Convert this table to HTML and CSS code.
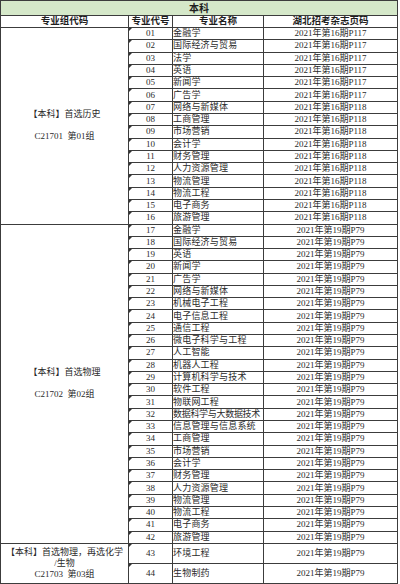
FILE: index.html
```html
<!DOCTYPE html>
<html lang="zh">
<head>
<meta charset="utf-8">
<title>本科</title>
<link rel="stylesheet" href="styles.css">
</head>
<body>
<table class="sheet">
  <colgroup>
    <col class="c1"><col class="c2"><col class="c3"><col class="c4">
  </colgroup>
  <thead>
    <tr class="title-row"><th colspan="4" class="title">本科</th></tr>
    <tr class="head-row">
      <th>专业组代码</th><th>专业代号</th><th>专业名称</th><th>湖北招考杂志页码</th>
    </tr>
  </thead>
  <tbody>
    <tr><td class="group" rowspan="16">【本科】首选历史<br><br>C21701&nbsp;&nbsp;第01组</td><td class="code">01</td><td class="name">金融学</td><td class="page">2021年第16期P117</td></tr>
    <tr><td class="code">02</td><td class="name">国际经济与贸易</td><td class="page">2021年第16期P117</td></tr>
    <tr><td class="code">03</td><td class="name">法学</td><td class="page">2021年第16期P117</td></tr>
    <tr><td class="code">04</td><td class="name">英语</td><td class="page">2021年第16期P117</td></tr>
    <tr><td class="code">05</td><td class="name">新闻学</td><td class="page">2021年第16期P117</td></tr>
    <tr><td class="code">06</td><td class="name">广告学</td><td class="page">2021年第16期P117</td></tr>
    <tr><td class="code">07</td><td class="name">网络与新媒体</td><td class="page">2021年第16期P118</td></tr>
    <tr><td class="code">08</td><td class="name">工商管理</td><td class="page">2021年第16期P118</td></tr>
    <tr><td class="code">09</td><td class="name">市场营销</td><td class="page">2021年第16期P118</td></tr>
    <tr><td class="code">10</td><td class="name">会计学</td><td class="page">2021年第16期P118</td></tr>
    <tr><td class="code">11</td><td class="name">财务管理</td><td class="page">2021年第16期P118</td></tr>
    <tr><td class="code">12</td><td class="name">人力资源管理</td><td class="page">2021年第16期P118</td></tr>
    <tr><td class="code">13</td><td class="name">物流管理</td><td class="page">2021年第16期P118</td></tr>
    <tr><td class="code">14</td><td class="name">物流工程</td><td class="page">2021年第16期P118</td></tr>
    <tr><td class="code">15</td><td class="name">电子商务</td><td class="page">2021年第16期P118</td></tr>
    <tr><td class="code">16</td><td class="name">旅游管理</td><td class="page">2021年第16期P118</td></tr>
    <tr><td class="group" rowspan="26">【本科】首选物理<br><br>C21702&nbsp;&nbsp;第02组</td><td class="code">17</td><td class="name">金融学</td><td class="page">2021年第19期P79</td></tr>
    <tr><td class="code">18</td><td class="name">国际经济与贸易</td><td class="page">2021年第19期P79</td></tr>
    <tr><td class="code">19</td><td class="name">英语</td><td class="page">2021年第19期P79</td></tr>
    <tr><td class="code">20</td><td class="name">新闻学</td><td class="page">2021年第19期P79</td></tr>
    <tr><td class="code">21</td><td class="name">广告学</td><td class="page">2021年第19期P79</td></tr>
    <tr><td class="code">22</td><td class="name">网络与新媒体</td><td class="page">2021年第19期P79</td></tr>
    <tr><td class="code">23</td><td class="name">机械电子工程</td><td class="page">2021年第19期P79</td></tr>
    <tr><td class="code">24</td><td class="name">电子信息工程</td><td class="page">2021年第19期P79</td></tr>
    <tr><td class="code">25</td><td class="name">通信工程</td><td class="page">2021年第19期P79</td></tr>
    <tr><td class="code">26</td><td class="name">微电子科学与工程</td><td class="page">2021年第19期P79</td></tr>
    <tr><td class="code">27</td><td class="name">人工智能</td><td class="page">2021年第19期P79</td></tr>
    <tr><td class="code">28</td><td class="name">机器人工程</td><td class="page">2021年第19期P79</td></tr>
    <tr><td class="code">29</td><td class="name">计算机科学与技术</td><td class="page">2021年第19期P79</td></tr>
    <tr><td class="code">30</td><td class="name">软件工程</td><td class="page">2021年第19期P79</td></tr>
    <tr><td class="code">31</td><td class="name">物联网工程</td><td class="page">2021年第19期P79</td></tr>
    <tr><td class="code">32</td><td class="name name-long">数据科学与大数据技术</td><td class="page">2021年第19期P79</td></tr>
    <tr><td class="code">33</td><td class="name">信息管理与信息系统</td><td class="page">2021年第19期P79</td></tr>
    <tr><td class="code">34</td><td class="name">工商管理</td><td class="page">2021年第19期P79</td></tr>
    <tr><td class="code">35</td><td class="name">市场营销</td><td class="page">2021年第19期P79</td></tr>
    <tr><td class="code">36</td><td class="name">会计学</td><td class="page">2021年第19期P79</td></tr>
    <tr><td class="code">37</td><td class="name">财务管理</td><td class="page">2021年第19期P79</td></tr>
    <tr><td class="code">38</td><td class="name">人力资源管理</td><td class="page">2021年第19期P79</td></tr>
    <tr><td class="code">39</td><td class="name">物流管理</td><td class="page">2021年第19期P79</td></tr>
    <tr><td class="code">40</td><td class="name">物流工程</td><td class="page">2021年第19期P79</td></tr>
    <tr><td class="code">41</td><td class="name">电子商务</td><td class="page">2021年第19期P79</td></tr>
    <tr><td class="code">42</td><td class="name">旅游管理</td><td class="page">2021年第19期P79</td></tr>
    <tr class="tall"><td class="group group-small" rowspan="2">【本科】首选物理，再选化学<br>/生物<br>C21703&nbsp;&nbsp;第03组</td><td class="code">43</td><td class="name">环境工程</td><td class="page">2021年第19期P79</td></tr>
    <tr class="tall"><td class="code">44</td><td class="name">生物制药</td><td class="page">2021年第19期P79</td></tr>
  </tbody>
</table>
</body>
</html>
```
FILE: styles.css
```css
html, body {
  margin: 0;
  padding: 0;
  background: #ffffff;
}

.sheet {
  border-collapse: collapse;
  table-layout: fixed;
  width: 397px;
  font-family: "Liberation Serif", "Noto Sans CJK SC", serif;
  font-size: 9px;
  color: #2a2a2a;
}

.c1 { width: 128px; }
.c2 { width: 44px; }
.c3 { width: 91px; }
.c4 { width: 134px; }

.sheet th,
.sheet td {
  border: 1px solid #3c3c3c;
  padding: 0;
  line-height: 11px;
  vertical-align: middle;
  white-space: nowrap;
  overflow: hidden;
}

.sheet tbody tr { height: 12.29px; }

.title-row { height: 15px; }
.head-row { height: 12px; }

.title {
  background: #d5e8c9;
  font-size: 10px;
  font-weight: bold;
  text-align: center;
  color: #1e1e1e;
}

.head-row th {
  font-size: 9.5px;
  font-weight: bold;
  text-align: center;
  color: #1e1e1e;
}

.group {
  text-align: center;
  line-height: 12.5px;
  white-space: normal;
}

.group-small {
  line-height: 10.5px;
}

.code {
  position: relative;
  text-align: center;
}

.code::before {
  content: "";
  position: absolute;
  top: 0;
  left: 0;
  border-top: 3px solid #333;
  border-right: 3px solid transparent;
}

.name {
  text-align: left;
  padding-left: 3px;
  letter-spacing: 0.2px;
}

.name-long {
  padding-left: 2px;
  letter-spacing: -0.3px;
}

.page {
  text-align: center;
}

.sheet tbody tr.tall { height: 20px; }
```
